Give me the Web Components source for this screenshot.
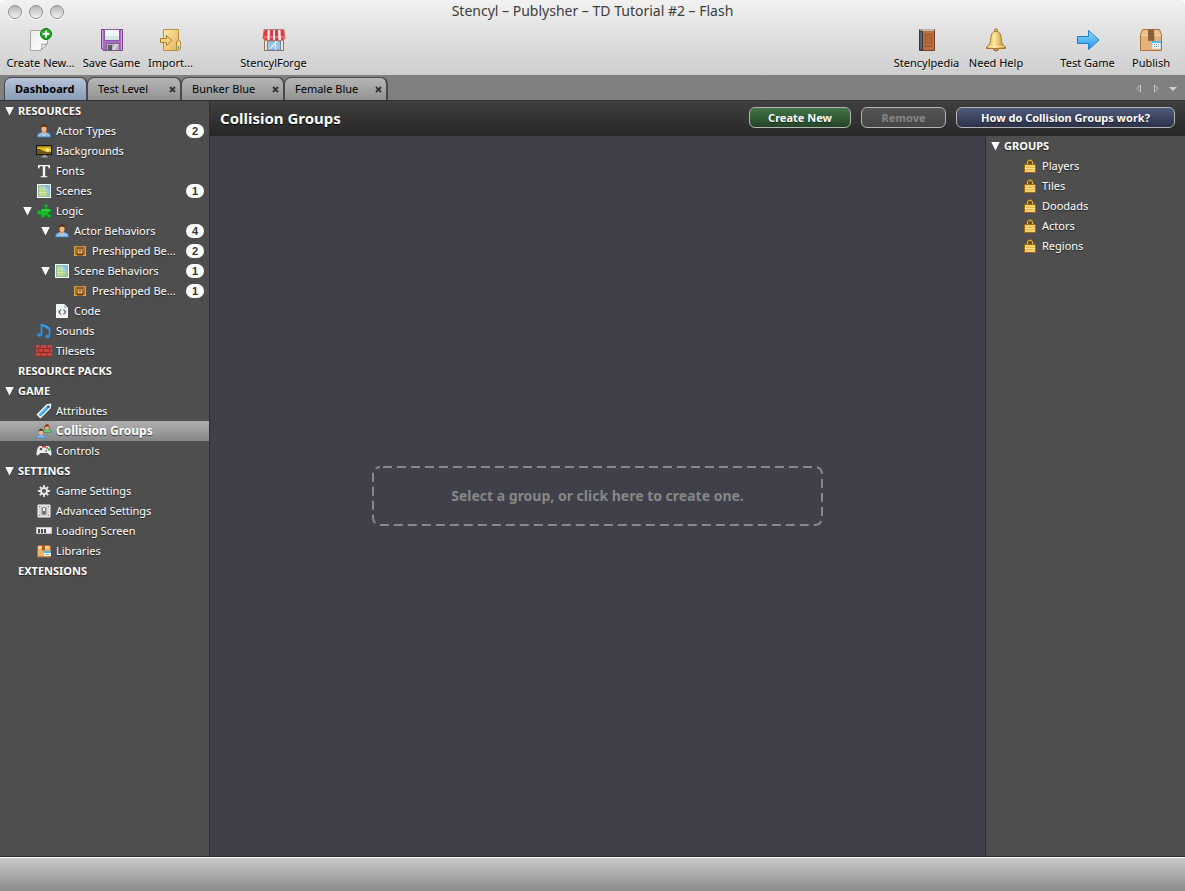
<!DOCTYPE html>
<html lang="en">
<head>
<meta charset="utf-8">
<title>Stencyl – Publysher – TD Tutorial #2 – Flash</title>
<style>
html, body { height: 100%; margin: 0; background: #fff; }
body { font-family: "Noto Sans", "Open Sans", sans-serif; font-size: 11px; color: #fff; }
</style>
</head>
<body>
<stencyl-app></stencyl-app>
<script>
const ICONS = {
  newdoc: `<svg viewBox="0 0 24 24"><defs><linearGradient id="a" x2="1" y2="1"><stop stop-color="#ececec"/><stop offset="1" stop-color="#fff"/></linearGradient></defs><path d="M1.500 2.500h17v13l-7 7h-10z" fill="url(#a)" stroke="#a8a8a8"/><path d="M18.500 15.500c-2 1-4 1.200-5.700.7.500 2.500.2 4.500-1.300 6.300z" fill="#fff" stroke="#999"/><circle cx="17" cy="6" r="5.500" fill="#17a31b" stroke="#0b7d10"/><path d="M12.500 5a5 4 0 0 1 9 0z" fill="#6fd668" opacity=".6"/><path d="M17 2.500v7M13.500 6h7" stroke="#fff" stroke-width="2"/></svg>`,
  save: `<svg viewBox="0 0 24 24"><path d="M1.500 1.500h21v21h-19l-2-2z" fill="#a868c4" stroke="#7c3c9c"/><path d="M2.500 2v18M21.500 2v20" stroke="#d0a0e4"/><path d="M4.500 1.500h15v11h-15z" fill="#eef5f4" stroke="#8a58a4"/><path d="M5 8h14v4H5z" fill="#d5e6e6"/><path d="M6.500 15.500h13v7h-13z" fill="#b7adbd" stroke="#756880"/><path d="M8 17h4v5H8z" fill="#61536c"/><path d="M15 16l-3 6h3l3-6z" fill="#dcd4e2"/></svg>`,
  import: `<svg viewBox="0 0 24 24"><defs><linearGradient id="b" x2="1" y2="1"><stop stop-color="#ffeaa5"/><stop offset="1" stop-color="#e0b460"/></linearGradient></defs><path d="M4.500 1.500h15v21h-15z" fill="url(#b)" stroke="#ba8f3d"/><path d="M1.500 10.500h6v-3l5.500 5-5.500 5v-3h-6z" fill="#f6d07b" stroke="#a67c2d"/><path d="M17.500 22v-8l2-2.500 2 2.500v7l-2 1.500z" fill="#f4ce73" stroke="#b58833"/><path d="M20 14v4" stroke="#fff"/><path d="M19.500 18v3" stroke="#4b9bb5"/></svg>`,
  shop: `<svg viewBox="0 0 24 24"><path d="M2.500 12.500h19v10h-19z" fill="#f6e4c4" stroke="#8e7160"/><path d="M5.500 13h13v9h-13z" fill="#9cc3ec" stroke="#6888ad"/><path d="M7 21l7-8h2l-7 8z" fill="#d8eafa"/><path d="M13.500 13v9" stroke="#eee"/><path d="M2 1.500h20l1 9-2 2H3l-2-2z" fill="#f5f1f1" stroke="#b97b78"/><path d="M2.500 2h3v10H3l-2-2zM8 2h3v10.500H7.500zM13 2h3l.5 10.500H13zM18.500 2h3l1.200 8-1.700 2h-2z" fill="#e2383f"/><path d="M2 9h20" stroke="#fff" opacity=".25" stroke-width="2"/></svg>`,
  book: `<svg viewBox="0 0 24 24"><path d="M4.500 1.500h15v21h-15z" fill="#c07040" stroke="#70402a"/><path d="M5 2h14" stroke="#c5dcdd" stroke-width="1.500"/><path d="M4.500 3h3v19h-3z" fill="#5d6468" stroke="#33383b"/><path d="M10 6.500h6.500v12H10z" fill="#b8693b" stroke="#9a5530"/><path d="M12 9.500h2.500v6H12z" fill="none" stroke="#a8603a"/></svg>`,
  bell: `<svg viewBox="0 0 24 24"><defs><linearGradient id="c"><stop stop-color="#cf9d42"/><stop offset=".4" stop-color="#ffeba0"/><stop offset="1" stop-color="#bd8428"/></linearGradient></defs><circle cx="12" cy="2.500" r="1.600" fill="#efc869" stroke="#9d7021"/><ellipse cx="12" cy="21" rx="2.500" ry="1.800" fill="#d2a144" stroke="#866225"/><path d="M12 3.500c-4.500 0-5 4-5.500 9-.3 3-1.200 5-4 6.500v1.500h19V19c-2.800-1.500-3.700-3.500-4-6.500-.5-5-1-9-5.500-9z" fill="url(#c)" stroke="#a87727"/><path d="M4 18.500h16" stroke="#ffe7a2"/></svg>`,
  arrow: `<svg viewBox="0 0 24 24"><defs><linearGradient id="d" x2="0" y2="1"><stop stop-color="#9be0ff"/><stop offset="1" stop-color="#168ff0"/></linearGradient></defs><path d="M1.500 8.500h11v-6L23 12 12.500 21.500v-6h-11z" fill="url(#d)" stroke="#1d7dc5" stroke-linejoin="round"/></svg>`,
  box: `<svg viewBox="0 0 24 24"><path d="M3.500 1.500h17l2 5v16h-21v-16z" fill="#edc089" stroke="#a8713d"/><path d="M2 7h20v15H2z" fill="#e6b07a"/><path d="M2 7.500h20" stroke="#f7d6a5"/><path d="M9 1.500h6l.5 12-1.200-1-1.200 1-1.200-1-1.200 1-1.500-1z" fill="#87603c"/><path d="M13.500 13.500h8v7h-8z" fill="#fff" stroke="#ddd"/><path d="M13 13h9v2h-9z" fill="#4eb9ea"/><path d="M15 16.500h6M15 18.500h6" stroke="#568fae" stroke-dasharray="1 1"/></svg>`,
  actor: `<svg viewBox="0 0 16 16"><path d="M1.500 14c0-3 1-4 4-4.500h5c3 .5 4 1.500 4 4.500z" fill="#8fc0f0" stroke="#3f7bb8" stroke-width=".8"/><path d="M5.500 9.500h5L8 13z" fill="#f4fbff"/><path d="M6.500 7.500h3v3L8 12l-1.500-1.500z" fill="#dc965e"/><ellipse cx="8" cy="5.500" rx="2.700" ry="3.500" fill="#f3b681"/><path d="M5 6.500C4 2.500 5.500 1.200 8 1.200s4 1.300 3 5.300L10.500 4 6 3.800z" fill="#59351e"/></svg>`,
  monitor: `<svg viewBox="0 0 16 16"><path d="M0 2h16v10H0z" fill="#17150d"/><path d="M1 3h14v7.500H1z" fill="#e9c21e"/><path d="M1 6c3-1 5 2 8 2.500l6 .5v1.500H1z" fill="#6d5512"/><circle cx="11.500" cy="7" r="1.800" fill="#fff7a8"/><path d="M1 3h14v1.500H1z" fill="#a88018"/><path d="M7 12h3v1.500H7zM5 13.500h7v1H5z" fill="#a2a2a2"/></svg>`,
  font: `<svg viewBox="0 0 16 16"><path d="M2 2h12v3.500h-1L12 3.200H9.200V13l2.300.4v.8h-7v-.8l2.300-.4V3.200H4L3 5.500H2z" fill="#f4f4f4"/></svg>`,
  scene: `<svg viewBox="0 0 16 16"><defs><linearGradient id="s" x1="0" y1="1" x2="1" y2="0"><stop stop-color="#cfd76e"/><stop offset=".5" stop-color="#a5cf86"/><stop offset=".65" stop-color="#9bcbe8"/><stop offset="1" stop-color="#79b4e2"/></linearGradient></defs><path d="M1 1h14v14H1z" fill="#f4fafa"/><path d="M2.500 2.500h11v11h-11z" fill="url(#s)" stroke="#6fa9a6" stroke-width=".7"/><path d="M5 3v10M8 3v10M3 6l8 .5M3 9.500h8" fill="none" stroke="#e2efb0" stroke-width=".7"/></svg>`,
  puzzle: `<svg viewBox="0 0 16 16"><path d="M7 6h2.500V4.500C7.700 3.500 7.800 1 10 1s2.500 2.500 1 3.500l.5 1.500H15v3c-1.600-.8-2.500 0-2.500 1.200s1 2 2.500 1.300v3h-3.500c.5-1.700-.2-2.200-1.300-2.200s-1.700.8-1.200 2.200H5v-3.300c-1.700 1-4 .6-4-1.500S3.300 7 5 8V6z" fill="#18ba28" stroke="#07821a" stroke-width=".7"/><path d="M6 7h8" stroke="#5fe069"/></svg>`,
  chest: `<svg viewBox="0 0 16 16"><path d="M2.500 3h11l.5 10H2z" fill="#9a6430"/><path d="M3 3.500h10M2.500 7h11" stroke="#c08a42"/><path d="M2.500 13V3.500h2M13.500 13V3.500h-2M2 12.500h3M11 12.500h3" stroke="#e2b03f" fill="none"/><path d="M5 11.500h6" stroke="#6b401c"/><path d="M6.500 7.500v2h3v-2" fill="none" stroke="#f4d36c"/></svg>`,
  code: `<svg viewBox="0 0 16 16"><path d="M2.500 1.500h8l3 3v10h-11z" fill="#edf3f3" stroke="#fff"/><path d="M10 1v4h4z" fill="#b9c7ca"/><path d="M7 6.500L5 9l2 2.500M9.500 6.500l2 2.500-2 2.500" fill="none" stroke="#465557" stroke-width="1.200"/></svg>`,
  note: `<svg viewBox="0 0 16 16"><path d="M5.500 11.500V1.500c2.500.3 5.500 2 8 4v7.500" fill="none" stroke="#2696ef" stroke-width="1.700"/><path d="M6 2c3 .8 5 2 7.500 4" stroke="#2c9df2" stroke-width="2.200" fill="none"/><ellipse cx="3.500" cy="12" rx="2.500" ry="1.800" fill="#2a91e5"/><ellipse cx="11.500" cy="13.500" rx="2.400" ry="1.700" fill="#2a91e5"/></svg>`,
  bricks: `<svg viewBox="0 0 16 16"><path d="M0 2h4v1h2V2h4v1h2V2h4v12H0z" fill="#c4483f"/><path d="M0 5.500h16M0 9.500h16M0 13.500h16M4 3v3M11 3v3M7.500 6v4M13.500 6v4M2.500 6v4M5 10v4M11 10v4" stroke="#8a2c28" fill="none"/></svg>`,
  tag: `<svg viewBox="0 0 16 16"><path d="M1.500 11.500L11 2l3.500-.5L14 5l-9.500 9.500z" fill="#249be8" stroke="#f6fcff" stroke-width="1.500"/><path d="M3.500 12L11 4.500" stroke="#75cfff"/><circle cx="12.300" cy="3.700" r="1.300" fill="#3f6075"/></svg>`,
  people: `<svg viewBox="0 0 16 16"><path d="M6.500 9.500c0-2.500 2-3 4.500-3s4.500.5 4.500 3z" fill="#69c777" stroke="#388c48" stroke-width=".6"/><ellipse cx="11" cy="4" rx="2" ry="2.800" fill="#efb68a"/><path d="M8.500 6.500c-1-7.500 6-7.500 5 0L12.500 3.500l-3 .3z" fill="#8a3c21"/><path d="M.5 15c0-2.500 2-3.300 4.500-3.300S9.500 12.500 9.500 15z" fill="#7db9f0" stroke="#3d7ab8" stroke-width=".6"/><ellipse cx="5" cy="9" rx="2.200" ry="3" fill="#f3b681"/><path d="M2.500 9.500C2 4.500 8 4.500 7.500 9.500L6.800 7.800H3.200z" fill="#3d2b21"/></svg>`,
  pad: `<svg viewBox="0 0 16 16"><path d="M4 3h8c2 0 3.500 4.500 3.500 8 0 2-1.500 2-2.500.5L11.500 10h-7L3 11.500C2 13 .5 13 .5 11 .5 7.500 2 3 4 3z" fill="#ececec"/><circle cx="5" cy="6" r="1.300" fill="#555"/><circle cx="10" cy="8" r="1" fill="#777"/><circle cx="11" cy="5" r="1" fill="#e14131"/><circle cx="13" cy="6.500" r="1.200" fill="#32ad3f"/><path d="M6 3h4v1.500H6z" fill="#cb3832"/></svg>`,
  gear: `<svg viewBox="0 0 16 16"><path d="M8 2v12M2 8h12M3.800 3.800l8.400 8.400M12.200 3.800l-8.400 8.400" stroke="#e4e4ea" stroke-width="1.800"/><circle cx="8" cy="8" r="3" fill="#555" stroke="#e4e4ea" stroke-width="1.800"/></svg>`,
  switch: `<svg viewBox="0 0 16 16"><path d="M2 2h12v12H2z" fill="#d4d4da" stroke="#f6f6f6"/><path d="M6 4.500h4v7H6z" fill="#6b6b70" stroke="#999"/><path d="M7 5h2v3H7z" fill="#eee"/><path d="M3 3h1v1H3zM12 3h1v1h-1zM3 12h1v1H3zM12 12h1v1h-1z" fill="#777"/></svg>`,
  loading: `<svg viewBox="0 0 16 16"><path d="M.5 4.500h15v6H.5z" fill="#eee" stroke="#c4c4c4"/><path d="M2 6h2v4H2zM5 6h2v4H5zM8 6h2v4H8z" fill="#4a4a4a"/></svg>`,
  library: `<svg viewBox="0 0 16 16"><path d="M2.500 2.500h11l1 2v9.500h-13V4.500z" fill="#eeb26c" stroke="#b96924"/><path d="M2 3h12v2.500H2z" fill="#f7cd90"/><path d="M6 2h3v6l-1.500-1L6 8z" fill="#9c5c2c"/><path d="M8 8h7v5H8z" fill="#fff"/><path d="M8 8h7v2H8z" fill="#45b5ee"/><path d="M9 11.500h4" stroke="#78bddd"/></svg>`,
  lock: `<svg viewBox="0 0 16 16"><path d="M5.500 7.500V4.500c0-3 5-3 5 0v3" fill="none" stroke="#7a5a1c" stroke-width="2.500"/><path d="M5.500 7.500V4.500c0-3 5-3 5 0v3" fill="none" stroke="#efc24b"/><path d="M2.500 6.500h11v8h-11z" fill="#efb843" stroke="#9a6b1c"/><path d="M3 8h10M3 10.500h10M3 13h10" stroke="#ffe89a"/></svg>`
};

function define(name, css, render) {
  customElements.define(name, class extends HTMLElement {
    constructor() {
      super();
      this.attachShadow({ mode: "open" });
    }
    connectedCallback() {
      const tpl = document.createElement("template");
      tpl.innerHTML = `<style>*{box-sizing:border-box}button,a{font:inherit;color:inherit}${css}</style>${render(this)}`;
      this.shadowRoot.replaceChildren(tpl.content.cloneNode(true));
    }
  });
}

define("app-icon",
  `:host{display:block;flex:none;width:16px;height:16px}:host([large]){width:24px;height:24px}svg{display:block;width:100%;height:100%}`,
  el => ICONS[el.getAttribute("name")]);

define("tool-button",
  `:host{display:block}
   button{display:flex;flex-direction:column;align-items:center;gap:3px;width:100%;padding:0;border:0;background:none;color:#000;line-height:16px;white-space:nowrap;text-shadow:0 1px 0 rgba(255,255,255,.6)}`,
  el => `<button type="button"><app-icon large name="${el.getAttribute("icon")}"></app-icon><span><slot></slot></span></button>`);

define("window-bar",
  `:host{display:block;height:75px;border-radius:5px 5px 0 0;background:linear-gradient(#f2f2f2,#e6e6e6 30%,#cecece);color:#3c3c3c}
   .title{display:grid;grid-template-columns:1fr auto 1fr;align-items:center;height:24px;padding:0 8px}
   h1{margin:0;padding-bottom:2px;font-size:14px;font-weight:400;line-height:20px}
   .lights{display:flex;gap:7px}
   .lights button{width:14px;height:14px;padding:0;border:1px solid #8e8e8e;border-radius:50%;background:linear-gradient(#b5b5b5,#d4d4d4 50%,#f0f0f0);box-shadow:0 1px 0 #fff}
   nav{display:flex;justify-content:space-between;padding:4px 14px 0 6px}
   .group{display:flex;gap:8px}
   .w40{width:40px}.w45{width:45px}.w54{width:54px}.w57{width:57px}.w69{width:69px}
   .far{margin-left:38px}.mid{margin-left:28px}.pub{margin-left:7px}`,
  () => `<div class="title"><div class="lights"><button type="button" aria-label="Close"></button><button type="button" aria-label="Minimize"></button><button type="button" aria-label="Zoom"></button></div><h1>Stencyl – Publysher – TD Tutorial #2 – Flash</h1></div>
   <nav><div class="group">
    <tool-button class="w69" icon="newdoc">Create New...</tool-button>
    <tool-button class="w57" icon="save">Save Game</tool-button>
    <tool-button class="w45" icon="import">Import...</tool-button>
    <tool-button class="w69 far" icon="shop">StencylForge</tool-button>
   </div><div class="group">
    <tool-button class="w69" icon="book">Stencylpedia</tool-button>
    <tool-button class="w54" icon="bell">Need Help</tool-button>
    <tool-button class="w57 mid" icon="arrow">Test Game</tool-button>
    <tool-button class="w40 pub" icon="box">Publish</tool-button>
   </div></nav>`);

define("tab-item",
  `:host{display:flex;align-items:center;height:23px;margin-right:-1px;border:2px solid #484848;border-width:1px 2px 0 1px;border-radius:7px 7px 0 0;background:linear-gradient(#b6b6b6,#929292);color:#000}
   :host([active]){background:linear-gradient(#b7c4d8,#889cb6);font-weight:700}
   button{padding:0;border:0;background:none}
   .label{flex:1;padding:0 0 0 10px;text-align:left;line-height:20px;white-space:nowrap}
   .close{display:block;width:7px;height:7px;margin-right:4px}
   svg{display:block;width:7px;height:7px}`,
  el => `<button type="button" class="label"><slot></slot></button>${el.hasAttribute("active") ? "" : `<button type="button" class="close" aria-label="Close tab"><svg viewBox="0 0 7 7"><path d="M1 1l5 5M6 1l-5 5" stroke="#333" stroke-width="1.800"/></svg></button>`}`);

define("tab-strip",
  `:host{display:flex;align-items:flex-end;height:26px;padding:0 8px 0 4px;background:#808080;border-bottom:1px solid #303030}
   .tabs{display:flex;flex:1}
   .w84{width:84px}.w95{width:95px}.w104{width:104px}
   .arrows{display:flex;gap:9px;height:24px;align-items:center}
   .arrows button{display:block;padding:0;border:0;background:none;width:8px;height:9px}
   svg{display:block;width:8px;height:9px}`,
  () => `<div class="tabs"><tab-item active class="w84">Dashboard</tab-item><tab-item class="w95">Test Level</tab-item><tab-item class="w104">Bunker Blue</tab-item><tab-item class="w104">Female Blue</tab-item></div>
   <div class="arrows"><button type="button" aria-label="Previous tab"><svg viewBox="0 0 8 9"><path d="M5.500 1v7L2 4.500z" fill="none" stroke="#c8c8c8"/></svg></button><button type="button" aria-label="Next tab"><svg viewBox="0 0 8 9"><path d="M2.500 1v7L6 4.500z" fill="none" stroke="#c8c8c8"/></svg></button><button type="button" aria-label="All tabs"><svg viewBox="0 0 8 9"><path d="M0 3h8L4 7z" fill="#d0d0d0"/></svg></button></div>`);

define("tree-row",
  `:host{display:block}
   button{display:flex;align-items:center;gap:4px;width:100%;height:20px;padding:0 5px 0 calc(5px + 18px * var(--depth));border:0;background:none;text-align:left;line-height:20px;text-shadow:0 1px 1px rgba(0,0,0,.6)}
   :host([heading]) button,:host([selected]) button{font-weight:700}
   :host([selected]) button{font-size:12px;background:linear-gradient(#b0b0b0,#868686)}
   .tri{flex:none;width:9px;height:9px}
   .open{background:#fff;clip-path:polygon(0 0,100% 0,50% 100%)}
   .text{flex:1;white-space:nowrap}
   .badge{flex:none;width:18px;height:14px;border-radius:7px;background:#fff;color:#333;font:700 11px/14px "Liberation Sans",sans-serif;text-align:center;text-shadow:none}`,
  el => {
    const a = n => el.getAttribute(n);
    return `<style>:host{--depth:${a("depth") || 0}}</style><button type="button"><span class="tri ${el.hasAttribute("open") ? "open" : ""}"></span>${a("icon") ? `<app-icon name="${a("icon")}"></app-icon>` : ""}<span class="text"><slot></slot></span>${a("badge") ? `<span class="badge">${a("badge")}</span>` : ""}</button>`;
  });

define("side-tree",
  `:host{display:block;background:#4e4e4e}`,
  () => `<slot></slot>`);

define("pill-button",
  `:host{display:block}
   button{display:block;width:100%;height:21px;padding:0;border:1px solid #b4b4b4;border-radius:6px;background:linear-gradient(var(--from),var(--to));font-weight:700;line-height:19px;color:#fff;text-shadow:0 1px 1px rgba(0,0,0,.6)}
   button:disabled{color:#858585;text-shadow:none}`,
  el => `<button type="button" ${el.hasAttribute("disabled") ? "disabled" : ""}><slot></slot></button>`);

define("drop-prompt",
  `:host{display:block;width:451px;max-width:90%}
   button{display:grid;place-items:center;width:100%;height:60px;padding:0;border:0;background:none;color:#878787;font-size:14px;font-weight:700;line-height:20px}
   svg,span{grid-area:1/1}svg{width:100%;height:100%}`,
  () => `<button type="button"><svg aria-hidden="true"><rect x="1" y="1" width="99.550%" height="58" rx="7" fill="none" stroke="#888" stroke-width="2" stroke-dasharray="9 5" stroke-dashoffset="-3"/></svg><span><slot></slot></span></button>`);

define("groups-page",
  `:host{display:grid;grid-template:35px 1fr/1fr 200px}
   header{grid-column:1/-1;display:flex;align-items:center;gap:10px;padding:0 10px 2px;background:linear-gradient(#404040,#272727)}
   h2{flex:1;margin:0;font-size:15px;font-weight:700;line-height:20px;text-shadow:0 1px 1px #000}
   .create{width:102px;--from:#427446;--to:#234528}
   .remove{width:85px;--from:#545454;--to:#454545}
   .how{width:219px;--from:#505a7c;--to:#2b3148}
   main{display:grid;place-items:center;background:#40404a}
   side-tree{border-left:1px solid #303030}`,
  () => `<header><h2>Collision Groups</h2><pill-button class="create">Create New</pill-button><pill-button class="remove" disabled>Remove</pill-button><pill-button class="how">How do Collision Groups work?</pill-button></header>
   <main><drop-prompt>Select a group, or click here to create one.</drop-prompt></main>
   <side-tree><tree-row heading open>GROUPS</tree-row>${["Players", "Tiles", "Doodads", "Actors", "Regions"].map(t => `<tree-row depth="1" icon="lock">${t}</tree-row>`).join("")}</side-tree>`);

define("stencyl-app",
  `:host{display:grid;grid-template:auto auto 1fr 35px/210px 1fr;height:100vh}
   window-bar,tab-strip,footer{grid-column:1/-1}
   .nav{border-right:1px solid #303030}
   footer{border-top:1px solid #2c2c2e;background:linear-gradient(#fff 1px,#cacaca 1px,#8c8c8c)}`,
  () => `<window-bar></window-bar><tab-strip></tab-strip>
   <side-tree class="nav">
    <tree-row heading open>RESOURCES</tree-row>
    <tree-row depth="1" icon="actor" badge="2">Actor Types</tree-row>
    <tree-row depth="1" icon="monitor">Backgrounds</tree-row>
    <tree-row depth="1" icon="font">Fonts</tree-row>
    <tree-row depth="1" icon="scene" badge="1">Scenes</tree-row>
    <tree-row depth="1" icon="puzzle" open>Logic</tree-row>
    <tree-row depth="2" icon="actor" badge="4" open>Actor Behaviors</tree-row>
    <tree-row depth="3" icon="chest" badge="2">Preshipped Be...</tree-row>
    <tree-row depth="2" icon="scene" badge="1" open>Scene Behaviors</tree-row>
    <tree-row depth="3" icon="chest" badge="1">Preshipped Be...</tree-row>
    <tree-row depth="2" icon="code">Code</tree-row>
    <tree-row depth="1" icon="note">Sounds</tree-row>
    <tree-row depth="1" icon="bricks">Tilesets</tree-row>
    <tree-row heading>RESOURCE PACKS</tree-row>
    <tree-row heading open>GAME</tree-row>
    <tree-row depth="1" icon="tag">Attributes</tree-row>
    <tree-row depth="1" icon="people" selected>Collision Groups</tree-row>
    <tree-row depth="1" icon="pad">Controls</tree-row>
    <tree-row heading open>SETTINGS</tree-row>
    <tree-row depth="1" icon="gear">Game Settings</tree-row>
    <tree-row depth="1" icon="switch">Advanced Settings</tree-row>
    <tree-row depth="1" icon="loading">Loading Screen</tree-row>
    <tree-row depth="1" icon="library">Libraries</tree-row>
    <tree-row heading>EXTENSIONS</tree-row>
   </side-tree>
   <groups-page></groups-page><footer></footer>`);
</script>
</body>
</html>
